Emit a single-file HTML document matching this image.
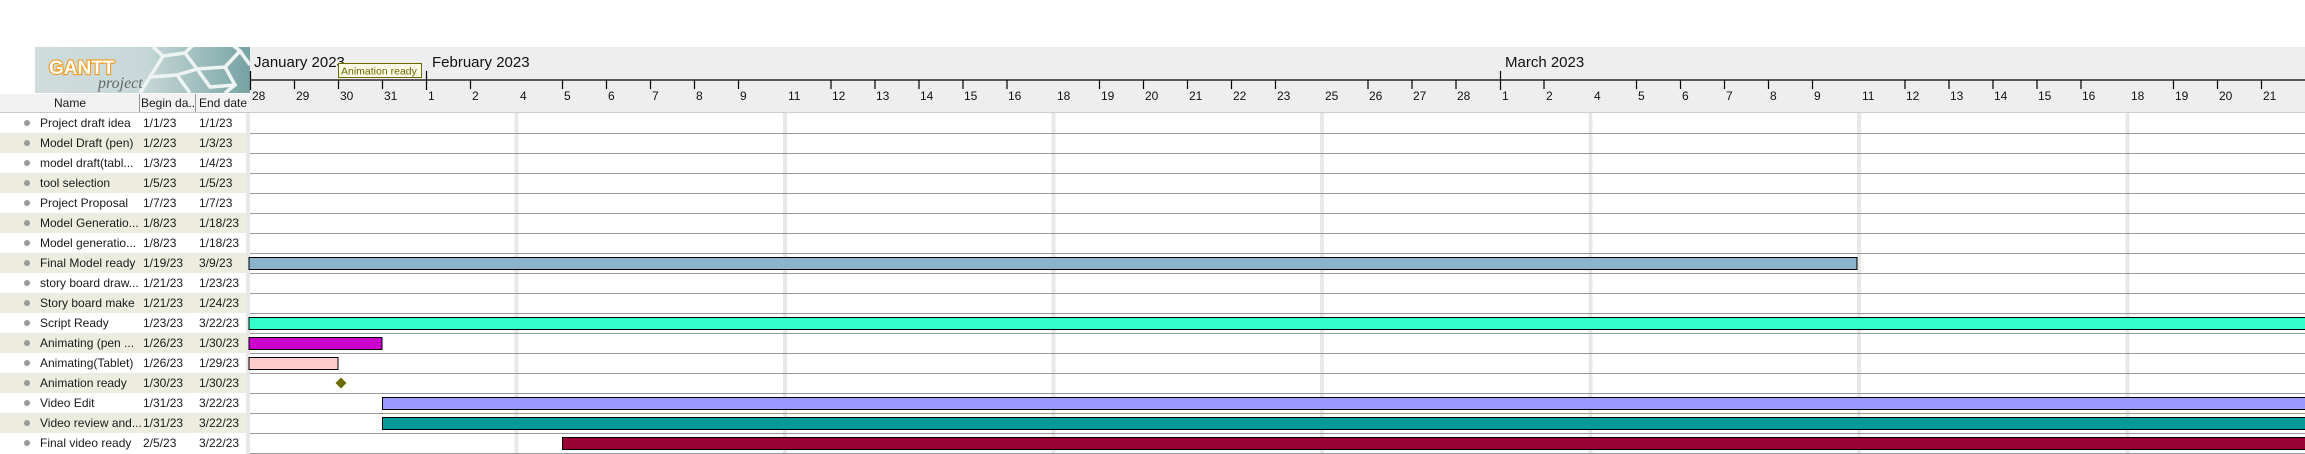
<!DOCTYPE html>
<html><head><meta charset="utf-8"><style>
body{margin:0;width:2305px;height:454px;overflow:hidden;background:#fff;font-family:"Liberation Sans","DejaVu Sans",sans-serif;position:relative}
.a{position:absolute;white-space:nowrap}
.row{position:absolute;left:0;width:250px;height:20px;font-size:12px;color:#1a1a1a;line-height:20px}
.row span{position:absolute;white-space:nowrap}
.b{background:#ececdf}
.dot{position:absolute;left:24px;top:7px;width:6px;height:6px;border-radius:50%;background:#999}
</style></head><body>
<!-- logo -->
<div class="a" style="left:35px;top:47px;width:215px;height:46px;background:linear-gradient(90deg,#cfdcdc 0%,#c8d8d8 50%,#9dbcbc 78%,#76a2a2 100%);overflow:hidden">
<svg width="215" height="46" style="position:absolute;left:0;top:0">
<g fill="none" stroke="#eef4f4" stroke-width="3.5">
<path d="M118 0 L128 9 L150 6 L160 -4"/>
<path d="M105 46 L115 30 L142 28 L155 46"/>
<path d="M128 9 L115 30"/><path d="M150 6 L162 22 L142 28"/>
<path d="M162 22 L190 20 L205 4 L195 -4"/><path d="M190 20 L200 38 L190 46"/>
<path d="M162 22 L175 40 L200 38"/><path d="M205 4 L215 18"/>
</g>
<text x="14" y="27" font-family="Liberation Sans" font-weight="bold" font-size="19" fill="#fff" stroke="#f39a1e" stroke-width="2.2" paint-order="stroke">GANTT</text>
<text x="63" y="41" font-family="Liberation Serif" font-style="italic" font-size="16" fill="#666">project</text>
</svg></div>
<!-- table header -->
<div class="a" style="left:0;top:94px;width:250px;height:19px;background:#f2f2f2;border-bottom:1px solid #c8c8c8;box-sizing:border-box;font-size:12px;line-height:18px;color:#1a1a1a">
<span class="a" style="left:54px">Name</span>
<span class="a" style="left:139px;top:0;width:1px;height:18px;background:#999"></span>
<span class="a" style="left:141px">Begin da..</span>
<span class="a" style="left:195px;top:0;width:1px;height:18px;background:#999"></span>
<span class="a" style="left:199px">End date</span>
</div>
<div class="row" style="top:113px"><i class="dot"></i><span style="left:40px">Project draft idea</span><span style="left:143px">1/1/23</span><span style="left:199px">1/1/23</span></div>
<div class="row b" style="top:133px"><i class="dot"></i><span style="left:40px">Model Draft (pen)</span><span style="left:143px">1/2/23</span><span style="left:199px">1/3/23</span></div>
<div class="row" style="top:153px"><i class="dot"></i><span style="left:40px">model draft(tabl...</span><span style="left:143px">1/3/23</span><span style="left:199px">1/4/23</span></div>
<div class="row b" style="top:173px"><i class="dot"></i><span style="left:40px">tool selection</span><span style="left:143px">1/5/23</span><span style="left:199px">1/5/23</span></div>
<div class="row" style="top:193px"><i class="dot"></i><span style="left:40px">Project Proposal</span><span style="left:143px">1/7/23</span><span style="left:199px">1/7/23</span></div>
<div class="row b" style="top:213px"><i class="dot"></i><span style="left:40px">Model Generatio...</span><span style="left:143px">1/8/23</span><span style="left:199px">1/18/23</span></div>
<div class="row" style="top:233px"><i class="dot"></i><span style="left:40px">Model generatio...</span><span style="left:143px">1/8/23</span><span style="left:199px">1/18/23</span></div>
<div class="row b" style="top:253px"><i class="dot"></i><span style="left:40px">Final Model ready</span><span style="left:143px">1/19/23</span><span style="left:199px">3/9/23</span></div>
<div class="row" style="top:273px"><i class="dot"></i><span style="left:40px">story board draw...</span><span style="left:143px">1/21/23</span><span style="left:199px">1/23/23</span></div>
<div class="row b" style="top:293px"><i class="dot"></i><span style="left:40px">Story board make</span><span style="left:143px">1/21/23</span><span style="left:199px">1/24/23</span></div>
<div class="row" style="top:313px"><i class="dot"></i><span style="left:40px">Script Ready</span><span style="left:143px">1/23/23</span><span style="left:199px">3/22/23</span></div>
<div class="row b" style="top:333px"><i class="dot"></i><span style="left:40px">Animating (pen ...</span><span style="left:143px">1/26/23</span><span style="left:199px">1/30/23</span></div>
<div class="row" style="top:353px"><i class="dot"></i><span style="left:40px">Animating(Tablet)</span><span style="left:143px">1/26/23</span><span style="left:199px">1/29/23</span></div>
<div class="row b" style="top:373px"><i class="dot"></i><span style="left:40px">Animation ready</span><span style="left:143px">1/30/23</span><span style="left:199px">1/30/23</span></div>
<div class="row" style="top:393px"><i class="dot"></i><span style="left:40px">Video Edit</span><span style="left:143px">1/31/23</span><span style="left:199px">3/22/23</span></div>
<div class="row b" style="top:413px"><i class="dot"></i><span style="left:40px">Video review and...</span><span style="left:143px">1/31/23</span><span style="left:199px">3/22/23</span></div>
<div class="row" style="top:433px"><i class="dot"></i><span style="left:40px">Final video ready</span><span style="left:143px">2/5/23</span><span style="left:199px">3/22/23</span></div>

<svg class="a" style="left:0;top:0" width="2305" height="454">
<rect x="250" y="47" width="2055" height="65" fill="#eeeeee"/>
<line x1="250" y1="112.5" x2="2305" y2="112.5" stroke="#cfcfcf"/>
<g fill="#e8e8e8">
<rect x="246" y="113" width="4" height="341"/>
<rect x="514.5" y="113" width="4" height="341"/><rect x="783" y="113" width="4" height="341"/>
<rect x="1051.5" y="113" width="4" height="341"/><rect x="1320" y="113" width="4" height="341"/>
<rect x="1588.5" y="113" width="4" height="341"/><rect x="1857" y="113" width="4" height="341"/>
<rect x="2125.5" y="113" width="4" height="341"/>
</g>
<g stroke="#999" stroke-width="1">
<line x1="250" y1="133.5" x2="2305" y2="133.5"/><line x1="250" y1="153.5" x2="2305" y2="153.5"/>
<line x1="250" y1="173.5" x2="2305" y2="173.5"/><line x1="250" y1="193.5" x2="2305" y2="193.5"/>
<line x1="250" y1="213.5" x2="2305" y2="213.5"/><line x1="250" y1="233.5" x2="2305" y2="233.5"/>
<line x1="250" y1="253.5" x2="2305" y2="253.5"/><line x1="250" y1="273.5" x2="2305" y2="273.5"/>
<line x1="250" y1="293.5" x2="2305" y2="293.5"/><line x1="250" y1="313.5" x2="2305" y2="313.5"/>
<line x1="250" y1="333.5" x2="2305" y2="333.5"/><line x1="250" y1="353.5" x2="2305" y2="353.5"/>
<line x1="250" y1="373.5" x2="2305" y2="373.5"/><line x1="250" y1="393.5" x2="2305" y2="393.5"/>
<line x1="250" y1="413.5" x2="2305" y2="413.5"/><line x1="250" y1="433.5" x2="2305" y2="433.5"/>
<line x1="250" y1="453.5" x2="2305" y2="453.5"/>
</g>
<g stroke="#000" stroke-width="1.2">
<line x1="250" y1="80" x2="2305" y2="80"/>
<line x1="250.5" y1="71" x2="250.5" y2="90"/><line x1="426.5" y1="71" x2="426.5" y2="90"/><line x1="1500.5" y1="71" x2="1500.5" y2="90"/>
<path d="M294.5 80v9M338.5 80v9M382.5 80v9M470.5 80v9
M562.5 80v9M606.5 80v9M650.5 80v9M694.5 80v9M738.5 80v9
M831 80v9M875 80v9M919 80v9M963 80v9M1007 80v9
M1099.5 80v9M1143.5 80v9M1187.5 80v9M1231.5 80v9M1275.5 80v9
M1368 80v9M1412 80v9M1456 80v9M1544 80v9
M1636.5 80v9M1680.5 80v9M1724.5 80v9M1768.5 80v9M1812.5 80v9
M1905 80v9M1949 80v9M1993 80v9M2037 80v9M2081 80v9
M2173.5 80v9M2217.5 80v9M2261.5 80v9"/>
</g>
<g font-family="Liberation Sans" font-size="15" fill="#111">
<text x="254" y="67">January 2023</text><text x="432" y="67">February 2023</text><text x="1505" y="67">March 2023</text>
</g>
<g font-family="Liberation Sans" font-size="12" fill="#111">
<text x="252" y="100">28</text><text x="296" y="100">29</text><text x="340" y="100">30</text><text x="384" y="100">31</text><text x="428" y="100">1</text><text x="472" y="100">2</text>
<text x="520" y="100">4</text><text x="564" y="100">5</text><text x="608" y="100">6</text><text x="652" y="100">7</text><text x="696" y="100">8</text><text x="740" y="100">9</text>
<text x="788" y="100">11</text><text x="832" y="100">12</text><text x="876" y="100">13</text><text x="920" y="100">14</text><text x="964" y="100">15</text><text x="1008" y="100">16</text>
<text x="1057" y="100">18</text><text x="1101" y="100">19</text><text x="1145" y="100">20</text><text x="1189" y="100">21</text><text x="1233" y="100">22</text><text x="1277" y="100">23</text>
<text x="1325" y="100">25</text><text x="1369" y="100">26</text><text x="1413" y="100">27</text><text x="1457" y="100">28</text><text x="1502" y="100">1</text><text x="1546" y="100">2</text>
<text x="1594" y="100">4</text><text x="1638" y="100">5</text><text x="1682" y="100">6</text><text x="1726" y="100">7</text><text x="1770" y="100">8</text><text x="1814" y="100">9</text>
<text x="1862" y="100">11</text><text x="1906" y="100">12</text><text x="1950" y="100">13</text><text x="1994" y="100">14</text><text x="2038" y="100">15</text><text x="2082" y="100">16</text>
<text x="2131" y="100">18</text><text x="2175" y="100">19</text><text x="2219" y="100">20</text><text x="2263" y="100">21</text>
</g>
<rect x="338.5" y="63.5" width="83" height="14" fill="#fafae6" stroke="#6b6b00"/>
<text x="341" y="74.5" font-family="Liberation Sans" font-size="10.5" fill="#6b6b00">Animation ready</text>
<rect x="249" y="257.5" width="1608" height="12" fill="#8bb4cc" stroke="#000"/>
<rect x="249" y="317.5" width="2060" height="12" fill="#33ffcc" stroke="#000"/>
<rect x="249" y="337.5" width="133" height="12" fill="#cc00cc" stroke="#000"/>
<rect x="249" y="357.5" width="89" height="12" fill="#ffcccc" stroke="#000"/>
<path d="M341 377.5 L346.5 383 L341 388.5 L335.5 383 Z" fill="#6b6b00"/>
<rect x="382.5" y="397.5" width="1930" height="12" fill="#9999ff" stroke="#000"/>
<rect x="382.5" y="417.5" width="1930" height="12" fill="#009999" stroke="#000"/>
<rect x="562.5" y="437.5" width="1750" height="12" fill="#990033" stroke="#000"/>
</svg>
</body></html>
